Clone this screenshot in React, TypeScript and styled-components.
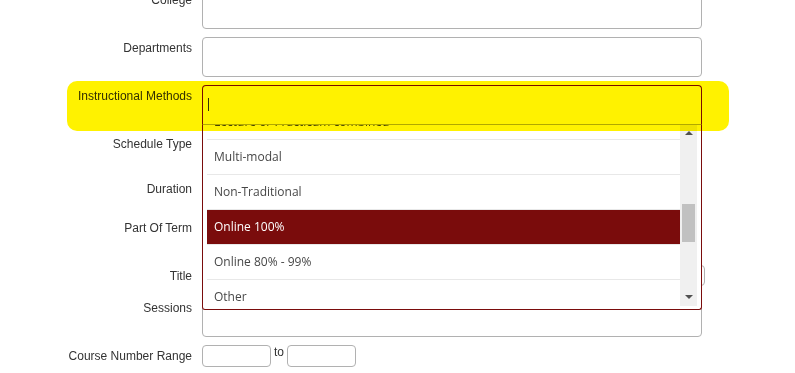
import React from 'react';
import styled, { createGlobalStyle } from 'styled-components';

const GlobalStyle = createGlobalStyle`
  html, body {
    margin: 0;
    padding: 0;
    background: #ffffff;
  }
  body {
    font-family: "Liberation Sans", Arial, sans-serif;
    overflow: hidden;
  }
`;

const options = [
  'Lecture or Practicum combined',
  'Multi-modal',
  'Non-Traditional',
  'Online 100%',
  'Online 80% - 99%',
  'Other',
];

const App: React.FC = () => {
  return (
    <>
      <GlobalStyle />
      <Page>
        <Form>
          <Row>
            <Label>College</Label>
            <Input $h={40} />
          </Row>
          <Row>
            <Label>Departments</Label>
            <Input $h={40} />
          </Row>
          <Row>
            <Label>Instructional Methods</Label>
            <Combo>
              <FocusedInput>
                <Caret />
              </FocusedInput>
              <Listbox>
                <Options>
                  {options.map((o) => (
                    <Option key={o} $active={o === 'Online 100%'}>
                      {o}
                    </Option>
                  ))}
                </Options>
                <Track>
                  <Arrow $dir="up" />
                  <Thumb />
                  <Arrow $dir="down" />
                </Track>
              </Listbox>
            </Combo>
          </Row>
          <Row>
            <Label>Schedule Type</Label>
            <Input $h={37} />
          </Row>
          <Row>
            <Label>Duration</Label>
            <Input $h={31} />
          </Row>
          <Row>
            <Label>Part Of Term</Label>
            <Input $h={40} />
          </Row>
          <Row $h={24}>
            <Label>Title</Label>
            <Input $h={21} $w={503} />
          </Row>
          <Row>
            <Label>Sessions</Label>
            <Input $h={40} />
          </Row>
          <Row>
            <Label>Course Number Range</Label>
            <Range>
              <Input $h={22} $w={69} />
              <To>to</To>
              <Input $h={22} $w={69} />
            </Range>
          </Row>
        </Form>
        <Highlight />
      </Page>
    </>
  );
};

export default App;

const Page = styled.div`
  position: relative;
  width: 795px;
  height: 373px;
  overflow: hidden;
`;

const Form = styled.div`
  display: flex;
  flex-direction: column;
  gap: 8px;
  margin-top: -11px;
`;

const Row = styled.div<{ $h?: number }>`
  display: flex;
  align-items: flex-start;
  gap: 10px;
  ${(p) => (p.$h ? `height: ${p.$h}px;` : '')}
`;

const Label = styled.div`
  width: 192px;
  text-align: right;
  padding-top: 4px;
  font-size: 12px;
  line-height: 14px;
  color: #333333;
`;

const Input = styled.div<{ $h: number; $w?: number }>`
  box-sizing: border-box;
  width: ${(p) => p.$w ?? 500}px;
  height: ${(p) => p.$h}px;
  border: 1px solid #b1b1b1;
  border-radius: 4px;
  background: #ffffff;
`;

const Combo = styled.div`
  position: relative;
  width: 500px;
  height: 40px;
  z-index: 2;
`;

const FocusedInput = styled.div`
  box-sizing: border-box;
  width: 500px;
  height: 40px;
  border: 1px solid #7a0c0c;
  border-bottom-color: #b1b1b1;
  border-radius: 4px 4px 0 0;
  background: #ffffff;
  padding: 12px 0 0 5px;
`;

const Caret = styled.span`
  display: block;
  width: 1px;
  height: 13px;
  background: #333333;
`;

const Listbox = styled.div`
  position: absolute;
  top: 40px;
  left: 0;
  box-sizing: border-box;
  width: 500px;
  height: 185px;
  border: 1px solid #7a0c0c;
  border-top: none;
  border-radius: 0 0 3px 3px;
  background: #ffffff;
  padding: 0 4px 3px 4px;
  display: flex;
  overflow: hidden;
`;

const Options = styled.div`
  flex: 1;
  margin-top: -20px;
  font-family: "Open Sans", "Liberation Sans", sans-serif;
  font-size: 12px;
`;

const Option = styled.div<{ $active?: boolean }>`
  box-sizing: border-box;
  height: 35px;
  display: flex;
  align-items: center;
  padding-left: 7px;
  padding-bottom: 1px;
  border-bottom: 1px solid #e8e8e8;
  color: ${(p) => (p.$active ? '#ffffff' : '#474747')};
  background: ${(p) => (p.$active ? '#7a0c0c' : '#ffffff')};
`;

const Track = styled.div`
  width: 17px;
  background: #f0f0f0;
  position: relative;
`;

const Arrow = styled.div<{ $dir: 'up' | 'down' }>`
  position: absolute;
  left: 5px;
  width: 0;
  height: 0;
  border-left: 4px solid transparent;
  border-right: 4px solid transparent;
  ${(p) =>
    p.$dir === 'up'
      ? 'top: 6px; border-bottom: 4px solid #505050;'
      : 'bottom: 7px; border-top: 4px solid #505050;'}
`;

const Thumb = styled.div`
  position: absolute;
  top: 79px;
  left: 2px;
  width: 13px;
  height: 38px;
  background: #c1c1c1;
`;

const Range = styled.div`
  display: flex;
  align-items: flex-start;
  gap: 3px;
`;

const To = styled.span`
  font-size: 12px;
  line-height: 14px;
  color: #333333;
`;

const Highlight = styled.div`
  position: absolute;
  left: 67px;
  top: 81px;
  width: 662px;
  height: 50px;
  border-radius: 10px;
  background: #fff200;
  mix-blend-mode: multiply;
  pointer-events: none;
  z-index: 5;
`;
